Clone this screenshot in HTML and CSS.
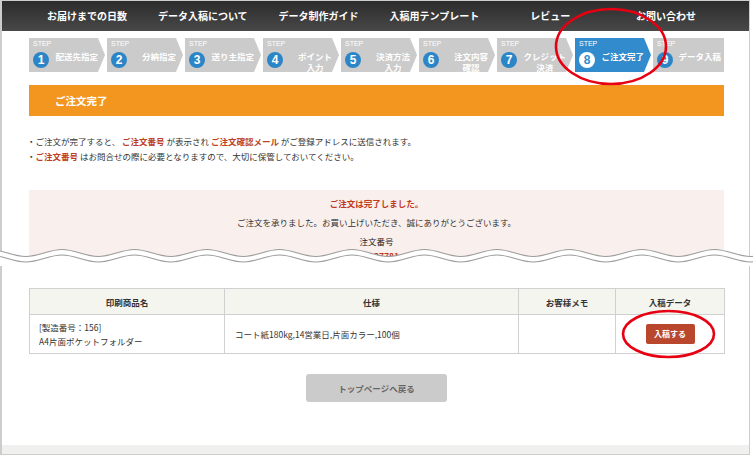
FILE: index.html
```html
<!DOCTYPE html>
<html lang="ja">
<head>
<meta charset="utf-8">
<title>ご注文完了</title>
<link rel="stylesheet" href="styles.css">
</head>
<body>
<div class="frame">
  <div class="page">
    <nav class="gnav">
      <ul class="gnav-list">
        <li>お届けまでの日数</li>
        <li>データ入稿について</li>
        <li>データ制作ガイド</li>
        <li>入稿用テンプレート</li>
        <li>レビュー</li>
        <li>お問い合わせ</li>
      </ul>
    </nav>
    <div class="container">
      <ol class="steps">
        <li class="step"><span class="step-en">STEP</span><div class="step-row"><span class="step-num">1</span><span class="step-label">配送先指定</span></div></li>
        <li class="step"><span class="step-en">STEP</span><div class="step-row"><span class="step-num">2</span><span class="step-label">分納指定</span></div></li>
        <li class="step"><span class="step-en">STEP</span><div class="step-row"><span class="step-num">3</span><span class="step-label">送り主指定</span></div></li>
        <li class="step"><span class="step-en">STEP</span><div class="step-row"><span class="step-num">4</span><span class="step-label">ポイント<br>入力</span></div></li>
        <li class="step"><span class="step-en">STEP</span><div class="step-row"><span class="step-num">5</span><span class="step-label">決済方法<br>入力</span></div></li>
        <li class="step"><span class="step-en">STEP</span><div class="step-row"><span class="step-num">6</span><span class="step-label">注文内容<br>確認</span></div></li>
        <li class="step"><span class="step-en">STEP</span><div class="step-row"><span class="step-num">7</span><span class="step-label">クレジット<br>決済</span></div></li>
        <li class="step is-current"><span class="step-en">STEP</span><div class="step-row"><span class="step-num">8</span><span class="step-label">ご注文完了</span></div></li>
        <li class="step is-last"><span class="step-en">STEP</span><div class="step-row"><span class="step-num">9</span><span class="step-label">データ入稿</span></div></li>
      </ol>

      <h2 class="title-bar">ご注文完了</h2>

      <ul class="notes">
        <li>・ご注文が完了すると、 <em>ご注文番号</em> が表示され <em>ご注文確認メール</em> がご登録アドレスに送信されます。</li>
        <li>・<em>ご注文番号</em> はお問合せの際に必要となりますので、大切に保管しておいてください。</li>
      </ul>

      <div class="done-box">
        <p class="done-title">ご注文は完了しました。</p>
        <p class="done-text">ご注文を承りました。お買い上げいただき、誠にありがとうございます。</p>
        <p class="done-label">注文番号</p>
        <p class="done-number">200037781</p>
        <p class="done-text">ご注文日時とご注文内容を記載した確認メールをお送りしております。</p>
      </div>

      <table class="items">
        <thead>
          <tr>
            <th class="col-name">印刷商品名</th>
            <th class="col-spec">仕様</th>
            <th class="col-memo">お客様メモ</th>
            <th class="col-data">入稿データ</th>
          </tr>
        </thead>
        <tbody>
          <tr>
            <td class="cell-name">[製造番号：156]<br>A4片面ポケットフォルダー</td>
            <td class="cell-spec">コート紙180kg,14営業日,片面カラー,100個</td>
            <td></td>
            <td class="cell-data"><a class="btn-upload">入稿する</a></td>
          </tr>
        </tbody>
      </table>

      <div class="back-wrap"><a class="btn-back">トップページへ戻る</a></div>
    </div>
  </div>
</div>

<svg class="wave" width="753" height="22" viewBox="0 0 753 22" aria-hidden="true">
  <defs>
    <pattern id="wv" x="-10.5" y="0" width="72.5" height="22" patternUnits="userSpaceOnUse">
      <path d="M0 5.5 C13.2 5.5 23 12.5 36.25 12.5 S59.3 5.5 72.5 5.5 V22 H0 Z" fill="#fff"/>
      <path d="M0 5.5 C13.2 5.5 23 12.5 36.25 12.5 S59.3 5.5 72.5 5.5" fill="none" stroke="#9a9a9a" stroke-width="1"/>
      <path d="M0 11 C13.2 11 23 18 36.25 18 S59.3 11 72.5 11" fill="none" stroke="#9a9a9a" stroke-width="1"/>
    </pattern>
  </defs>
  <rect x="0" y="0" width="753" height="22" fill="url(#wv)"/>
</svg>

<svg class="marks" width="753" height="456" viewBox="0 0 753 456" aria-hidden="true">
  <ellipse cx="611" cy="46.5" rx="55" ry="37.5" fill="none" stroke="#e60012" stroke-width="2.6"/>
  <ellipse cx="668.5" cy="334" rx="45.5" ry="23" fill="none" stroke="#e60012" stroke-width="2.6"/>
</svg>
</body>
</html>
```

FILE: styles.css
```css
* {
  box-sizing: border-box;
}

html, body {
  margin: 0;
  padding: 0;
  background: #fff;
}

body {
  position: relative;
  width: 753px;
  height: 456px;
  overflow: hidden;
  font-family: "Noto Sans CJK JP", "Noto Sans", sans-serif;
  color: #333;
}

.frame {
  width: 750px;
  height: 455px;
  border: 1px solid #cdcdcd;
  border-left-width: 2px;
  background: #f0f0ee;
}

.page {
  height: 444px;
  background: #fff;
}

/* global nav */
.gnav {
  height: 30px;
  background: linear-gradient(#2c2c2c, #484848);
}

.gnav-list {
  list-style: none;
  margin: 0 0 0 27px;
  padding: 0;
  width: 695px;
  height: 30px;
  display: flex;
}

.gnav-list li {
  flex: 1;
  text-align: center;
  color: #fff;
  font-weight: bold;
  font-size: 10px;
  line-height: 30px;
}

.container {
  width: 695px;
  margin-left: 27px;
}

/* steps */
.steps {
  list-style: none;
  margin: 7px 0 0;
  padding: 0;
  display: flex;
  gap: 2px;
  height: 34px;
}

.step {
  flex: none;
  width: 76px;
  height: 34px;
  background: #cbcbcb;
  color: #fff;
  padding: 2px 7px 0 4px;
  clip-path: polygon(0 0, calc(100% - 7px) 0, 100% 50%, calc(100% - 7px) 100%, 0 100%);
}

.step.is-last {
  flex: 1;
  width: auto;
  padding-right: 3px;
  clip-path: none;
}

.step.is-current {
  background: #318bcc;
}

.step-en {
  display: block;
  font-family: "Liberation Sans", Arial, sans-serif;
  font-size: 7px;
  line-height: 8px;
  color: #fff;
}

.step-row {
  display: flex;
  align-items: flex-start;
}

.step-num {
  flex: none;
  width: 16px;
  height: 16px;
  margin-top: 4px;
  border-radius: 50%;
  background: #2b85c6;
  color: #fff;
  font-family: "Liberation Sans", Arial, sans-serif;
  font-weight: bold;
  font-size: 12px;
  line-height: 16px;
  text-align: center;
}

.is-current .step-num {
  background: #fff;
  color: #318bcc;
}

.step-label {
  margin-left: auto;
  margin-top: 2.5px;
  font-size: 8.5px;
  font-weight: bold;
  line-height: 11px;
  text-align: center;
  white-space: nowrap;
}

/* title bar */
.title-bar {
  margin: 13px 0 0;
  height: 31px;
  background: #f39620;
  color: #fff;
  font-size: 10.5px;
  font-weight: bold;
  line-height: 31px;
  padding-left: 26px;
}

/* notes */
.notes {
  list-style: none;
  margin: 18px 0 0 -2px;
  padding: 0;
  font-size: 8.5px;
  line-height: 15px;
  color: #333;
}

.notes em {
  font-style: normal;
  font-weight: bold;
  color: #bd3f26;
}

/* done box */
.done-box {
  margin-top: 26px;
  height: 72px;
  overflow: hidden;
  background: #f9efec;
  padding-top: 4px;
  text-align: center;
  font-size: 8.5px;
  line-height: 19px;
}

.done-box p {
  margin: 0;
}

.done-title {
  color: #c0391f;
  font-weight: bold;
}

.done-text {
  color: #333;
}

.done-label {
  color: #222;
}

.done-number {
  margin-top: -4px !important;
  color: #c0391f;
  font-weight: bold;
}

/* table */
.items {
  margin-top: 26px;
  width: 695px;
  border-collapse: collapse;
  table-layout: fixed;
  font-size: 8.5px;
  color: #333;
}

.items th,
.items td {
  border: 1px solid #d0d0d0;
}

.items th {
  height: 26px;
  background: #f5f5f0;
  font-weight: bold;
  text-align: center;
  padding: 0;
}

.col-name { width: 195px; }
.col-spec { width: 294px; }
.col-memo { width: 97px; }
.col-data { width: 109px; }

.items td {
  height: 39px;
  vertical-align: middle;
  line-height: 14px;
}

.cell-name {
  padding-left: 9px;
}

.cell-spec {
  padding-left: 10px;
}

.cell-data {
  text-align: center;
}

.btn-upload {
  display: inline-block;
  width: 49px;
  height: 20px;
  border-radius: 2px;
  background: #b9472d;
  color: #fff;
  font-size: 8px;
  font-weight: bold;
  line-height: 20px;
  text-align: center;
  vertical-align: middle;
}

/* back button */
.back-wrap {
  margin-top: 20px;
  display: flex;
  justify-content: center;
}

.btn-back {
  display: block;
  width: 141px;
  height: 28px;
  border-radius: 3px;
  background: #cbcbcb;
  color: #666;
  font-size: 8.5px;
  font-weight: bold;
  line-height: 28px;
  text-align: center;
}

/* overlays */
.wave {
  position: absolute;
  left: 0;
  top: 244px;
  display: block;
}

.marks {
  position: absolute;
  left: 0;
  top: 0;
  display: block;
  pointer-events: none;
}
```
